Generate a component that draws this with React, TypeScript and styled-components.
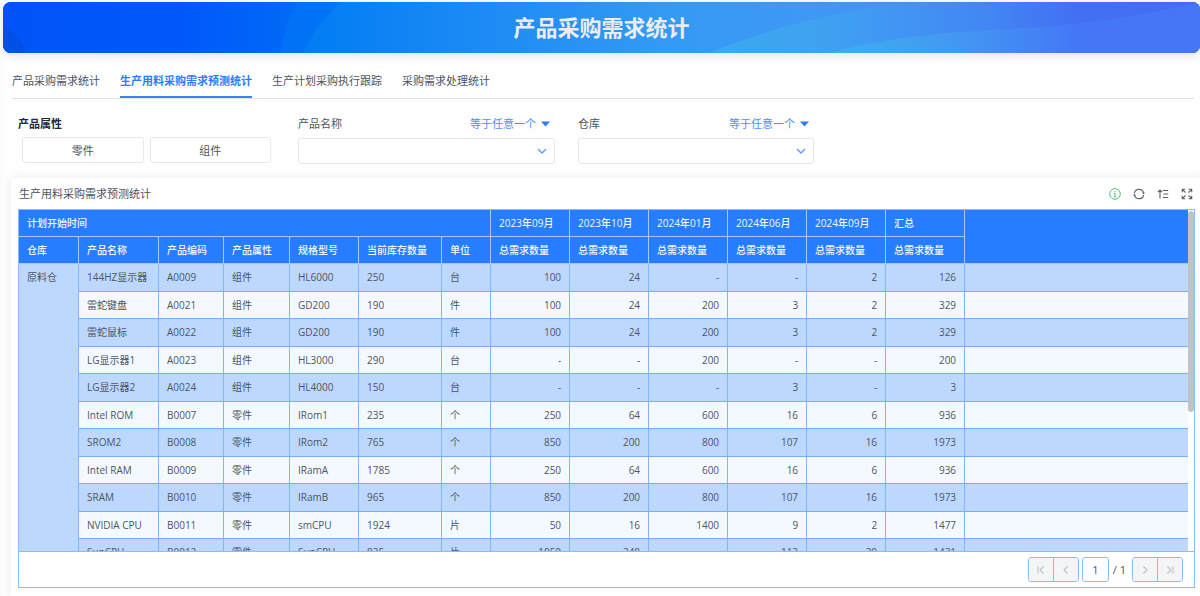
import React from "react";
import styled, { createGlobalStyle } from "styled-components";

const Global = createGlobalStyle`
  * { box-sizing: border-box; }
  body {
    margin: 0;
    background: #fcfcfe;
    color: #4d5563;
    font: 11px/16px "Open Sans", "Noto Sans CJK SC", sans-serif;
  }
  button, input, select { font: inherit; color: inherit; margin: 0; }
`;

const Page = styled.div`
  display: flex;
  flex-direction: column;
  height: 100vh;
  min-height: 420px;
  padding: 2px 0 0 3px;
`;

const Banner = styled.header`
  position: relative;
  display: flex;
  align-items: center;
  justify-content: center;
  flex: none;
  height: 51px;
  padding-bottom: 2px;
  border-radius: 8px;
  overflow: hidden;
  background: #005cfa;
  box-shadow: 0 2px 8px rgba(60, 60, 100, 0.12);
`;

const BannerArt = styled.svg`
  position: absolute;
  inset: 0;
  width: 100%;
  height: 100%;
`;

const Title = styled.h1`
  position: relative;
  margin: 0;
  font-size: 22px;
  line-height: 32px;
  font-weight: 700;
  color: #ececf2;
`;

const Card = styled.main`
  display: flex;
  flex-direction: column;
  flex: 1;
  min-height: 0;
  margin-top: 7px;
  background: #fefeff;
`;

const Tabs = styled.nav`
  display: flex;
  flex: none;
  gap: 20px;
  height: 39px;
  margin: 0 6px 0 9px;
  border-bottom: 1px solid #e2e3e6;
`;

const Tab = styled.a<{ $active?: boolean }>`
  height: 38px;
  padding-top: 13px;
  text-decoration: none;
  color: ${(p) => (p.$active ? "#2b7cff" : "#4d5563")};
  font-weight: ${(p) => (p.$active ? 700 : 400)};
  border-bottom: 2px solid ${(p) => (p.$active ? "#3b82f6" : "transparent")};
  white-space: nowrap;
`;

const Filters = styled.form`
  display: flex;
  flex: none;
  height: 79px;
  padding: 17px 16px 0 15px;
`;

const Choice = styled.fieldset`
  width: 254px;
  margin: 0 26px 0 0;
  padding: 0;
  border: 0;
`;

const ChoiceTitle = styled.legend`
  padding: 0;
  font-weight: 700;
  color: #1f2937;
`;

const ChoiceRow = styled.div`
  display: flex;
  gap: 6px;
  padding: 5px 1px 0 4px;
`;

const ChoiceButton = styled.button`
  flex: 1;
  height: 26px;
  padding: 1px 0 0;
  background: #fff;
  border: 1px solid #e8e8ea;
  border-radius: 3px;
`;

const Field = styled.div<{ $width: number }>`
  width: ${(p) => p.$width}px;
  margin-right: 23px;
`;

const FieldHead = styled.div`
  display: flex;
  justify-content: space-between;
  padding-right: 5px;
`;

const Operator = styled.button`
  display: flex;
  align-items: center;
  gap: 5px;
  padding: 0;
  border: 0;
  background: none;
  line-height: 16px;
  color: #4a90ff;
`;

const SelectBox = styled.div`
  display: grid;
  align-items: center;
  margin-top: 6px;
  > * { grid-area: 1 / 1; }
  > svg { justify-self: end; margin-right: 8px; pointer-events: none; }
`;

const Select = styled.select`
  width: 100%;
  height: 26px;
  padding: 0 24px 0 8px;
  appearance: none;
  background: #fff;
  border: 1px solid #e6e7ea;
  border-radius: 3px;
`;

const Panel = styled.section`
  display: flex;
  flex-direction: column;
  flex: 1;
  min-height: 0;
  margin-left: 8px;
  padding: 0 5px 8px 7px;
  background: #fff;
  box-shadow: 0 0 8px rgba(50, 50, 80, 0.1);
`;

const PanelHead = styled.div`
  display: flex;
  align-items: center;
  justify-content: space-between;
  flex: none;
  height: 31px;
  padding: 0 2px 0 1px;
`;

const PanelTitle = styled.h2`
  margin: 0;
  font-size: 11px;
  line-height: 16px;
  font-weight: 400;
`;

const Tools = styled.div`
  display: flex;
  gap: 12px;
`;

const ToolButton = styled.button`
  display: flex;
  padding: 0;
  border: 0;
  background: none;
`;

const Grid = styled.div`
  display: flex;
  flex-direction: column;
  flex: 1;
  min-height: 0;
  border: 1px solid #8dbbff;
`;

const Viewport = styled.div`
  display: flex;
  flex: 1;
  min-height: 0;
  overflow: hidden;
`;

const TableArea = styled.div`
  flex: 1;
  min-width: 0;
  overflow: hidden;
`;

const Track = styled.div`
  flex: none;
  width: 6px;
  background: #fff;
`;

const Thumb = styled.div`
  height: 59%;
  margin-top: 1px;
  border-radius: 3px;
  background: #c0c2c7;
`;

const Table = styled.table`
  width: 100%;
  table-layout: fixed;
  border-collapse: separate;
  border-spacing: 0;
  font-size: 10px;
  line-height: 16px;
`;

const Th = styled.th<{ $blank?: boolean }>`
  height: 27px;
  padding: 0 0 0 8px;
  text-align: left;
  font-weight: 500;
  color: #f4f8ff;
  background: #267dff;
  border-right: ${(p) => (p.$blank ? "0" : "1px solid #a5c9ff")};
  border-bottom: 1px solid #a5c9ff;
  white-space: nowrap;
`;

const Td = styled.td<{ $num?: boolean }>`
  padding: 0 8px;
  text-align: ${(p) => (p.$num ? "right" : "left")};
  border-right: 1px solid #82b4ff;
  border-bottom: 1px solid #77adff;
  white-space: nowrap;
`;

const BlankTd = styled.td`
  padding: 0;
  border-bottom: 1px solid #77adff;
`;

const GroupTd = styled.td`
  padding: 5px 8px;
  vertical-align: top;
  background: #bcd8ff;
  border-right: 1px solid #82b4ff;
`;

const Row = styled.tr`
  height: 27px;
  background: #f4f9ff;
  &:nth-child(odd) {
    height: 28px;
    background: #bcd8ff;
  }
  &:nth-child(odd) > ${Td} {
    padding-bottom: 1px;
  }
`;

const Footer = styled.footer`
  display: flex;
  flex: none;
  align-items: center;
  justify-content: flex-end;
  height: 36px;
  padding-right: 11px;
  border-top: 1px solid #8dbbff;
  background: #fff;
`;

const PageGroup = styled.div`
  display: flex;
  border: 1px solid #8dbbff;
  border-radius: 3px;
  overflow: hidden;
`;

const PageButton = styled.button`
  display: flex;
  align-items: center;
  justify-content: center;
  width: 24px;
  height: 23px;
  padding: 0;
  border: 0;
  background: #f4f5f7;
  & + & {
    width: 25px;
    border-left: 1px solid #8dbbff;
  }
`;

const PageInput = styled.input`
  width: 27px;
  height: 25px;
  margin: 0 4px 0 3px;
  padding: 0;
  text-align: center;
  border: 1px solid #8dbbff;
  border-radius: 3px;
  background: #fff;
`;

const PageTotal = styled.span`
  margin-right: 6px;
`;

const Caret = () => (
  <svg width="9" height="6" viewBox="0 0 9 6" aria-hidden="true">
    <path d="M0 0.5h9L4.5 5.5z" fill="#2b7cff" />
  </svg>
);

const Chevron = () => (
  <svg width="10" height="6" viewBox="0 0 10 6" fill="none" stroke="#5b9bff" strokeWidth="1.4" aria-hidden="true">
    <path d="M1 1l4 4 4-4" />
  </svg>
);

const InfoIcon = () => (
  <svg width="12" height="12" viewBox="0 0 12 12" fill="none" stroke="#4fc277" strokeWidth="1" aria-hidden="true">
    <circle cx="6" cy="6" r="5.3" />
    <path d="M6 2.8v1.2M4.9 5.2H6v3.6M4.7 8.9h2.6" />
  </svg>
);

const RefreshIcon = () => (
  <svg width="12" height="12" viewBox="0 0 12 12" fill="none" stroke="#606873" strokeWidth="1.2" aria-hidden="true">
    <path d="M1.3 5A4.8 4.8 0 0 1 10.6 4.8M10.7 7A4.8 4.8 0 0 1 1.4 7.2" />
    <path d="M8.9 4.4h3L10.7 6.4zM3.1 7.6h-3L1.3 5.6z" fill="#606873" stroke="none" />
  </svg>
);

const SortIcon = () => (
  <svg width="12" height="12" viewBox="0 0 12 12" fill="none" stroke="#59616d" strokeWidth="1.1" aria-hidden="true">
    <path d="M3 10.5V2.2M0.8 4.2L3 2l2.2 2.2M5.8 2.5h5.4M6.5 6h4.7M5.8 9.5h5.4" />
  </svg>
);

const ExpandIcon = () => (
  <svg width="12" height="12" viewBox="0 0 12 12" fill="none" stroke="#59616d" strokeWidth="1.1" aria-hidden="true">
    <path d="M4.3 1.3h-3v3M1.3 1.3l3.2 3.2M7.7 1.3h3v3M10.7 1.3L7.5 4.5M4.3 10.7h-3v-3M1.3 10.7l3.2-3.2M7.7 10.7h3v-3M10.7 10.7L7.5 7.5" />
  </svg>
);

const PageIcon = ({ d }: { d: string }) => (
  <svg width="8" height="8" viewBox="0 0 8 8" fill="none" stroke="#bcc0c6" strokeWidth="1.1" aria-hidden="true">
    <path d={d} />
  </svg>
);

const tabs = ["产品采购需求统计", "生产用料采购需求预测统计", "生产计划采购执行跟踪", "采购需求处理统计"];
const selects = [
  { id: "product", label: "产品名称", width: 257 },
  { id: "warehouse", label: "仓库", width: 236 },
];
const months = ["2023年09月", "2023年10月", "2024年01月", "2024年06月", "2024年09月", "汇总"];
const columns = ["仓库", "产品名称", "产品编码", "产品属性", "规格型号", "当前库存数量", "单位"];
const widths = [60, 80, 65, 66, 69, 83, 49, 79, 79, 79, 79, 79, 79];

const rows = [
  ["144HZ显示器", "A0009", "组件", "HL6000", "250", "台", "100", "24", "-", "-", "2", "126"],
  ["雷蛇键盘", "A0021", "组件", "GD200", "190", "件", "100", "24", "200", "3", "2", "329"],
  ["雷蛇鼠标", "A0022", "组件", "GD200", "190", "件", "100", "24", "200", "3", "2", "329"],
  ["LG显示器1", "A0023", "组件", "HL3000", "290", "台", "-", "-", "200", "-", "-", "200"],
  ["LG显示器2", "A0024", "组件", "HL4000", "150", "台", "-", "-", "-", "3", "-", "3"],
  ["Intel ROM", "B0007", "零件", "IRom1", "235", "个", "250", "64", "600", "16", "6", "936"],
  ["SROM2", "B0008", "零件", "IRom2", "765", "个", "850", "200", "800", "107", "16", "1973"],
  ["Intel RAM", "B0009", "零件", "IRamA", "1785", "个", "250", "64", "600", "16", "6", "936"],
  ["SRAM", "B0010", "零件", "IRamB", "965", "个", "850", "200", "800", "107", "16", "1973"],
  ["NVIDIA CPU", "B0011", "零件", "smCPU", "1924", "片", "50", "16", "1400", "9", "2", "1477"],
  ["SunCPU", "B0012", "零件", "SunCPU", "835", "片", "1050", "248", "-", "113", "20", "1431"],
];

export default function App() {
  return (
    <>
      <Global />
      <Page>
        <Banner>
          <BannerArt viewBox="0 0 1197 51" preserveAspectRatio="none" aria-hidden="true">
            <defs>
              <linearGradient id="base" x1="0" x2="1" y1="0" y2="0">
                <stop offset="0" stopColor="#0053f8" />
                <stop offset="0.15" stopColor="#0058fa" />
                <stop offset="0.3" stopColor="#0074f6" />
                <stop offset="1" stopColor="#0074f6" />
              </linearGradient>
              <linearGradient id="wave" gradientUnits="userSpaceOnUse" x1="300" x2="1197" y1="0" y2="0">
                <stop offset="0" stopColor="#007cf4" />
                <stop offset="0.16" stopColor="#1888f4" />
                <stop offset="0.4" stopColor="#339af4" />
                <stop offset="0.56" stopColor="#3f98f5" />
                <stop offset="0.7" stopColor="#4192f4" />
                <stop offset="1" stopColor="#4469ee" />
              </linearGradient>
              <linearGradient id="swell" gradientUnits="userSpaceOnUse" x1="705" x2="1197" y1="0" y2="0">
                <stop offset="0" stopColor="#3aaaee" />
                <stop offset="0.25" stopColor="#40a0f2" />
                <stop offset="0.55" stopColor="#4288f4" />
                <stop offset="0.75" stopColor="#4370f2" />
                <stop offset="1" stopColor="#446cf0" />
              </linearGradient>
              <linearGradient id="foam" gradientUnits="userSpaceOnUse" x1="825" x2="1080" y1="0" y2="0">
                <stop offset="0" stopColor="#3eb0ec" />
                <stop offset="0.5" stopColor="#4398f2" />
                <stop offset="1" stopColor="#4476f6" />
              </linearGradient>
            </defs>
            <rect width="1197" height="51" fill="url(#base)" />
            <path d="M0 22Q16 33 25 51H0z" fill="#0050e6" />
            <path d="M278 51Q280 25 294 0h60v51z" fill="#0072f6" />
            <path d="M300 51Q312 22 338 0H1197V51z" fill="url(#wave)" />
            <path d="M706 51Q780 19 900 0H1197V51z" fill="url(#swell)" />
            <path d="M825 51Q900 31 1010 27Q1110 21 1197 0V51z" fill="url(#foam)" />
          </BannerArt>
          <Title>产品采购需求统计</Title>
        </Banner>
        <Card>
          <Tabs>
            {tabs.map((t, i) => (
              <Tab key={t} href="#" $active={i === 1}>{t}</Tab>
            ))}
          </Tabs>
          <Filters>
            <Choice>
              <ChoiceTitle>产品属性</ChoiceTitle>
              <ChoiceRow>
                <ChoiceButton type="button">零件</ChoiceButton>
                <ChoiceButton type="button">组件</ChoiceButton>
              </ChoiceRow>
            </Choice>
            {selects.map((s) => (
              <Field key={s.id} $width={s.width}>
                <FieldHead>
                  <label htmlFor={s.id}>{s.label}</label>
                  <Operator type="button">等于任意一个<Caret /></Operator>
                </FieldHead>
                <SelectBox>
                  <Select id={s.id} defaultValue=""><option value="" /></Select>
                  <Chevron />
                </SelectBox>
              </Field>
            ))}
          </Filters>
          <Panel>
            <PanelHead>
              <PanelTitle>生产用料采购需求预测统计</PanelTitle>
              <Tools>
                <ToolButton aria-label="说明"><InfoIcon /></ToolButton>
                <ToolButton aria-label="刷新"><RefreshIcon /></ToolButton>
                <ToolButton aria-label="排序"><SortIcon /></ToolButton>
                <ToolButton aria-label="全屏"><ExpandIcon /></ToolButton>
              </Tools>
            </PanelHead>
            <Grid>
              <Viewport>
                <TableArea>
                  <Table>
                    <colgroup>
                      {widths.map((w, i) => <col key={i} width={w} />)}
                      <col />
                    </colgroup>
                    <thead>
                      <tr>
                        <Th colSpan={7}>计划开始时间</Th>
                        {months.map((m) => <Th key={m}>{m}</Th>)}
                        <Th rowSpan={2} $blank />
                      </tr>
                      <tr>
                        {columns.map((c) => <Th key={c}>{c}</Th>)}
                        {months.map((m) => <Th key={m}>总需求数量</Th>)}
                      </tr>
                    </thead>
                    <tbody>
                      {rows.map((r, i) => (
                        <Row key={r[1]}>
                          {i === 0 && <GroupTd rowSpan={rows.length}>原料仓</GroupTd>}
                          {r.map((v, c) => <Td key={c} $num={c > 5}>{v}</Td>)}
                          <BlankTd />
                        </Row>
                      ))}
                    </tbody>
                  </Table>
                </TableArea>
                <Track><Thumb /></Track>
              </Viewport>
              <Footer>
                <PageGroup>
                  <PageButton aria-label="首页"><PageIcon d="M1 0.5v7M6.5 0.5L3 4l3.5 3.5" /></PageButton>
                  <PageButton aria-label="上一页"><PageIcon d="M5.5 0.5L2 4l3.5 3.5" /></PageButton>
                </PageGroup>
                <PageInput aria-label="页码" defaultValue="1" />
                <PageTotal>/ 1</PageTotal>
                <PageGroup>
                  <PageButton aria-label="下一页"><PageIcon d="M2.5 0.5L6 4 2.5 7.5" /></PageButton>
                  <PageButton aria-label="末页"><PageIcon d="M7 0.5v7M1.5 0.5L5 4 1.5 7.5" /></PageButton>
                </PageGroup>
              </Footer>
            </Grid>
          </Panel>
        </Card>
      </Page>
    </>
  );
}
